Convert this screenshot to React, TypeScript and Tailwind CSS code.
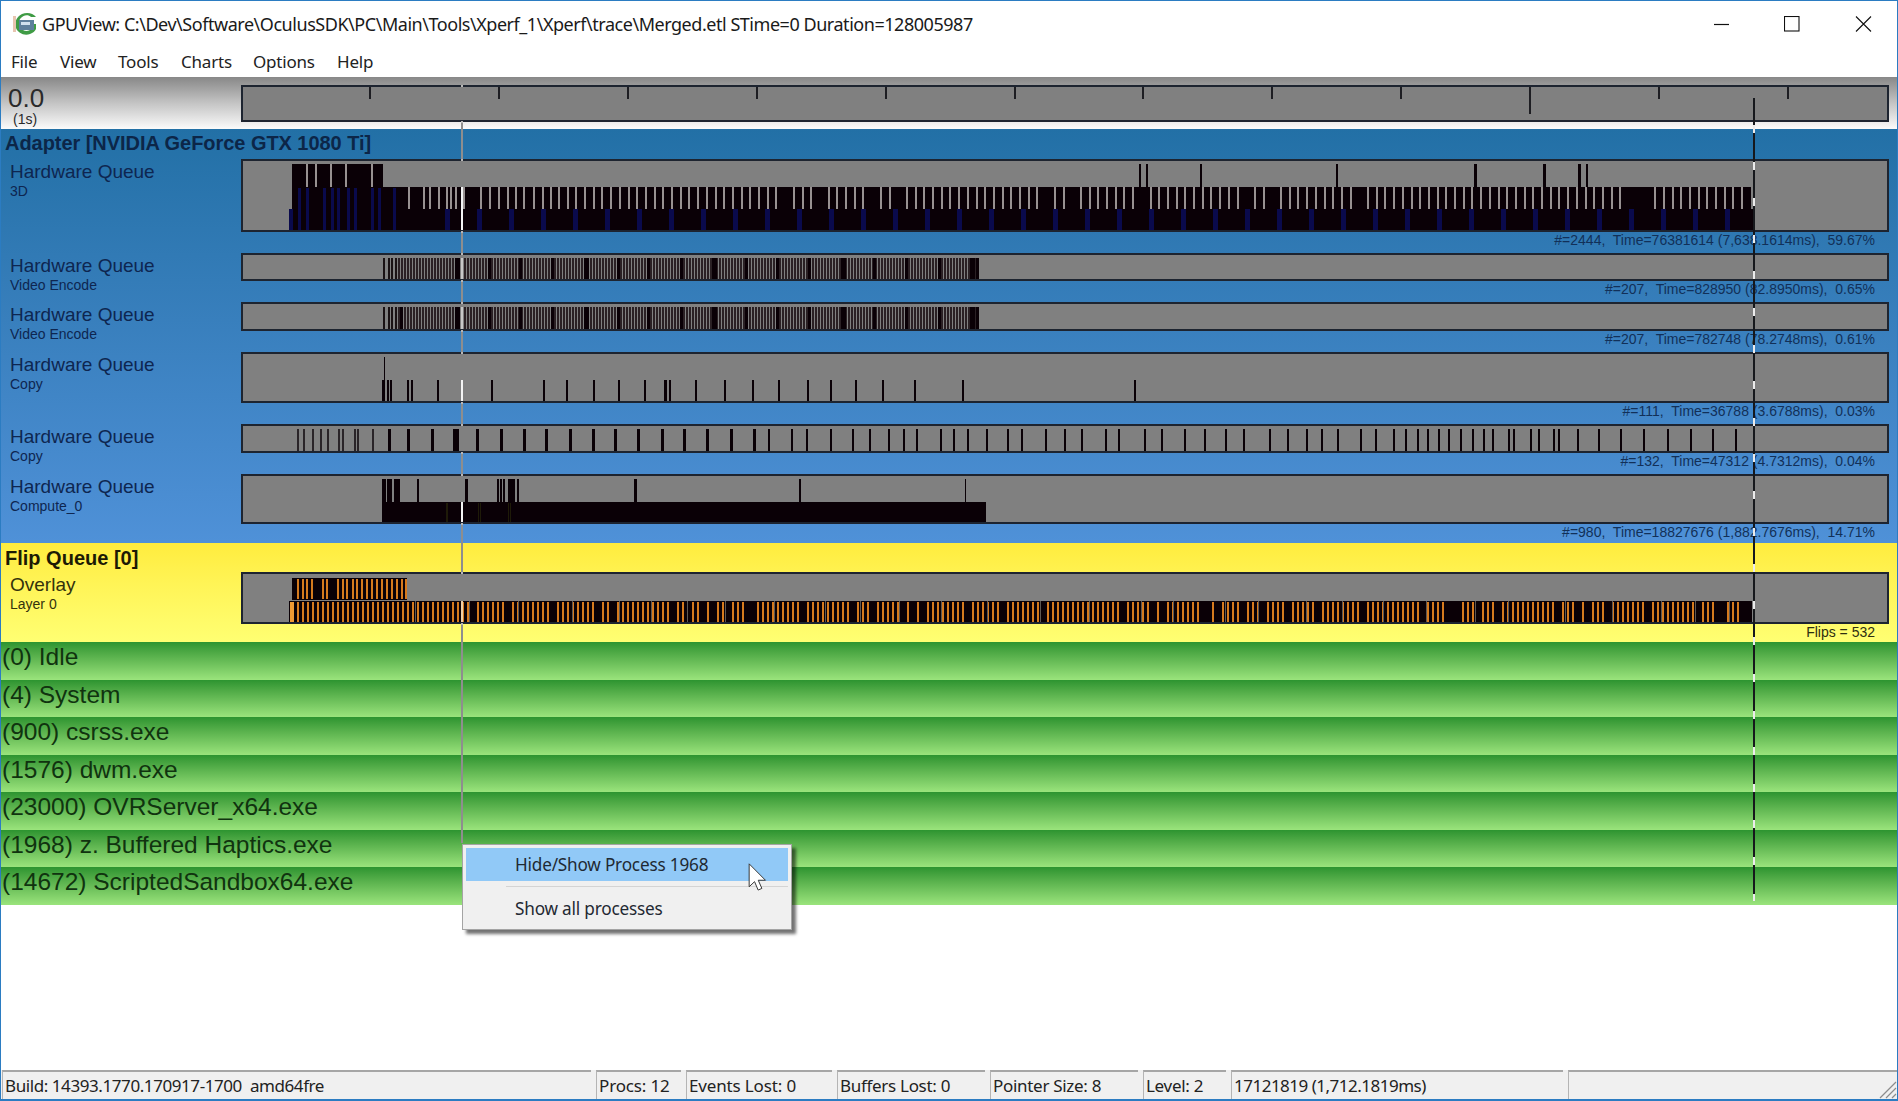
import React from "react";

type Rect = [number, number, number, number, string];

const BLACK = "#0a0006";
const BLUE = "#0a0a4c";
const ORANGE = "#d67a1e";
const LIGHT = "#989191";
const WHITE = "#f4f4f4";

function seeded(seed: number) {
  let s = seed;
  return () => {
    s = (s * 1664525 + 1013904223) % 4294967296;
    return s / 4294967296;
  };
}

function ticks(xs: number[], y: number, h: number, w = 2): Rect[] {
  return xs.map((x) => [x, y, w, h, BLACK] as Rect);
}

function hw3d(): Rect[] {
  const r: Rect[] = [];
  const rnd = seeded(11);
  r.push([292, 164, 91, 23, BLACK]);
  [306, 315, 330, 345, 371].forEach((x) => r.push([x, 164, 2, 23, LIGHT]));
  [1139, 1146, 1200, 1336, 1474, 1543, 1578, 1586].forEach((x) => r.push([x, 164, x === 1474 || x === 1543 || x === 1578 ? 3 : 2, 23, BLACK]));
  r.push([292, 187, 1459, 22, BLACK]);
  r.push([289, 209, 1465, 22, BLACK]);
  [408, 423, 429, 438, 446, 450, 455, 463, 480, 489, 498, 507, 515, 523, 533, 542, 550, 558, 567, 575].forEach((x) => r.push([x, 187, 2, 22, LIGHT]));
  for (let x = 584; x < 1745; x += 8.7) {
    const v = rnd();
    if (v > 0.07) r.push([Math.round(x), 187, 2, 22, LIGHT]);
  }
  [298, 306, 323, 331, 337, 347, 354, 371, 378, 393].forEach((x) => r.push([x, 188, 3, 43, BLUE]));
  r.push([289, 209, 4, 22, BLUE]);
  for (let x = 445; x < 1745; x += 32) r.push([Math.round(x), 209, 5, 22, BLUE]);
  r.push([461, 187, 2, 44, WHITE]);
  return r;
}

function encode(top: number, extra: number[]): Rect[] {
  const r: Rect[] = [];
  const y = top + 5;
  const h = 23;
  [383, 388, 391, 395].forEach((x) => r.push([x, y, 2, h, "#1a1214"]));
  for (let x = 398; x < 980; x += 3) r.push([x, y, 2, h, "#2a2024"]);
  [455, 488, 519, 551, 584, 617, 647, 680, 712, 745, 776, 808, 841, 873, 905, 938, 970, 976].concat(extra).forEach((x, i) => r.push([x, y, i % 4 === 0 ? 5 : 3, h, BLACK]));
  r.push([461, y, 2, h, "#c8c8c8"]);
  return r;
}

function copyA(): Rect[] {
  const r = ticks([383, 387, 390, 407, 411, 437, 491, 543, 566, 593, 618, 644, 664, 669, 695, 724, 752, 778, 807, 830, 855, 882, 914, 962, 1134], 380, 23);
  r.push([384, 357, 1, 23, BLACK]);
  r.push([382, 380, 3, 23, BLACK]);
  r.push([664, 380, 3, 23, BLACK]);
  r.push([461, 380, 2, 23, WHITE]);
  return r;
}

function copyB(): Rect[] {
  const xs = [297, 303, 312, 320, 327, 338, 342, 354, 357, 372, 388, 407, 431, 453, 456, 476, 500, 523, 545, 569, 592, 614, 637, 661, 683, 706, 730];
  const rnd = seeded(5);
  let x = 753;
  while (x < 1400) {
    xs.push(Math.round(x));
    x += 12 + rnd() * 14;
  }
  [15, 50, 80, 115, 145, 180, 215, 250, 275, 325, 340, 390, 415, 460, 475, 530, 595, 660, 730, 800, 870, 935, 1005].forEach((v) => xs.push(1400 + Math.round(v / 3)));
  return xs.map((v) => [v, 429, v < 380 ? 2 : v < 760 ? 3 : 2, 23, v < 380 ? "#2a2428" : BLACK] as Rect);
}

function compute(): Rect[] {
  const r: Rect[] = [
    [382, 479, 4, 23, BLACK],
    [387, 479, 5, 23, BLACK],
    [394, 479, 6, 23, BLACK],
    [417, 479, 2, 23, BLACK],
    [465, 479, 3, 23, BLACK],
    [497, 479, 2, 23, BLACK],
    [500, 479, 2, 23, BLACK],
    [503, 479, 2, 23, BLACK],
    [508, 479, 7, 23, BLACK],
    [517, 479, 2, 23, BLACK],
    [634, 479, 3, 23, BLACK],
    [799, 479, 2, 23, BLACK],
    [965, 479, 1, 23, BLACK],
    [382, 502, 604, 22, BLACK],
  ];
  [446, 447, 447, 480, 478, 508, 510].forEach((x) => r.push([x, 503, 1, 19, "#1e1a08"]));
  r.push([461, 502, 2, 22, WHITE]);
  return r;
}

function overlay(): Rect[] {
  const r: Rect[] = [[292, 578, 115, 22, BLACK], [289, 601, 1463, 23, BLACK]];
  [297, 302, 306, 311, 322, 326, 337, 342, 346, 352, 356, 361, 366, 371, 376, 381, 386, 391, 396, 401, 405].forEach((x) => r.push([x, 579, 2, 20, ORANGE]));
  r.push([290, 602, 4, 22, "#ef9a34"]);
  const rnd = seeded(23);
  for (let x = 297; x < 1750; x += 5) {
    if (x < 412 || rnd() > 0.13) r.push([x, 602, 2, 22, ORANGE]);
  }
  for (let x = 415; x < 1740; x += 32 + Math.floor(rnd() * 26)) r.push([x, 601, 1, 23, "#5e5854"]);
  r.push([461, 601, 2, 23, "#f0d0a8"]);
  return r;
}

function rulerTicks(): Rect[] {
  const r: Rect[] = [];
  for (let i = 0; i < 12; i++) {
    const x = 369 + Math.round(i * 128.9);
    r.push([x, 87, 2, i === 9 ? 27 : 12, "#1d1d22"]);
  }
  return r;
}

function Track({ top, height, rects }: { top: number; height: number; rects: Rect[] }) {
  const inner = height - 4;
  return (
    <div className="relative z-10 w-full border-2 border-[#1d2430] bg-[#808080]" style={{ height }}>
      <svg className="block h-full w-full" viewBox={`243 ${top + 2} 1644 ${inner}`} preserveAspectRatio="none" shapeRendering="crispEdges">
        {rects.map((b, i) => (
          <rect key={i} x={b[0]} y={b[1]} width={b[2]} height={b[3]} fill={b[4]} />
        ))}
      </svg>
    </div>
  );
}

function QueueRow({ top, height, rowHeight, title, sub, stat, rects, textClass, statClass }: { top: number; height: number; rowHeight: number; title: string; sub: string; stat: string; rects: Rect[]; textClass: string; statClass: string }) {
  return (
    <div className="flex" style={{ height: rowHeight }}>
      <div className={`w-[240px] shrink-0 pl-[9px] ${textClass}`}>
        <div className="h-[24px] pt-px text-[19px] leading-[24px] whitespace-nowrap">{title}</div>
        <div className="h-[16px] text-[14px] leading-[16px] whitespace-nowrap">{sub}</div>
      </div>
      <div className="min-w-0 flex-1 pr-[8px]">
        <Track top={top} height={height + 1} rects={rects} />
        <div className={`-mt-px pr-[14px] text-right text-[14px] leading-[18px] whitespace-pre ${statClass}`}>{stat}</div>
      </div>
    </div>
  );
}

function Process({ label }: { label: string }) {
  return (
    <div className="h-[37.5px] bg-gradient-to-b from-[#2c9430] to-[#9ae47c] pl-[1px] text-[24.5px] leading-[30px] whitespace-nowrap text-[#10330f]">
      {label}
    </div>
  );
}

function StatusCell({ w, children, extra = "" }: { w: string; children?: React.ReactNode; extra?: string }) {
  return (
    <div className={`${w} ${extra} h-full shrink-0 border-t-2 border-l border-t-[#a6a6a6] border-l-[#b4b4b4] pl-[2px] text-[17px] leading-[28px] whitespace-pre text-[#222]`}>
      {children}
    </div>
  );
}

const processes = ["(0) Idle", "(4) System", "(900) csrss.exe", "(1576) dwm.exe", "(23000) OVRServer_x64.exe", "(1968) z. Buffered Haptics.exe", "(14672) ScriptedSandbox64.exe"];
const crossings = [85, 121, 159, 231, 253, 280, 302, 330, 352, 402, 424, 452, 474, 523, 572, 623];

export default function App() {
  const blue = "text-[#0e2650]";
  const stat = "text-[#123058]";
  return (
    <div className="relative flex h-[1101px] w-[1898px] flex-col overflow-hidden border border-b-2 border-[#2b7cc2] bg-white font-['Liberation_Sans',sans-serif]">
      {/* title bar */}
      <div className="flex h-[46px] shrink-0 items-center pl-[12px] font-['Noto_Sans',sans-serif]">
        <svg width="26" height="24" viewBox="0 0 26 24" className="mr-[3px] shrink-0">
          <path d="M23 5C20 1 14 0 9 2 3 5 1 11 3 16c2 5 8 8 14 6 3-1 5-3 6-5v-5h-9v3h5v1c-2 3-6 4-9 2-4-2-5-7-3-11 3-4 8-5 11-2z" fill="#3f9b45" />
          <rect x="6" y="8" width="15" height="10" fill="#5d7f9c" />
          <rect x="8" y="10" width="9" height="3" fill="#cfe0ee" />
          <rect x="0" y="4" width="3" height="16" fill="#e8c4b0" />
        </svg>
        <span className="text-[18px] tracking-[-0.46px] whitespace-nowrap text-[#1a1a1a]">GPUView: C:\Dev\Software\OculusSDK\PC\Main\Tools\Xperf_1\Xperf\trace\Merged.etl STime=0 Duration=128005987</span>
        <div className="ml-auto flex items-center">
          <svg width="16" height="16" viewBox="0 0 16 16" className="mr-[54px]"><path d="M0 8.5h15" stroke="#111" strokeWidth="1.2" /></svg>
          <svg width="16" height="16" viewBox="0 0 16 16" className="mr-[55px]"><rect x="0.5" y="0.5" width="14.5" height="14.5" fill="none" stroke="#111" strokeWidth="1.1" /></svg>
          <svg width="17" height="16" viewBox="0 0 17 16" className="mr-[25px]"><path d="M1 0.5l15 15M16 0.5l-15 15" stroke="#111" strokeWidth="1.1" /></svg>
        </div>
      </div>
      {/* menu */}
      <div className="flex h-[30px] shrink-0 items-center pl-[10px] font-['Noto_Sans',sans-serif] text-[17px] tracking-[-0.2px] text-[#222]">
        <span className="w-[49px]">File</span>
        <span className="w-[58px]">View</span>
        <span className="w-[63px]">Tools</span>
        <span className="w-[72px]">Charts</span>
        <span className="w-[84px]">Options</span>
        <span>Help</span>
      </div>
      {/* ruler */}
      <div className="flex h-[52px] shrink-0 bg-gradient-to-b from-[#888888] via-[#c4c4c4] to-[#fbfbfb] pt-[8px]">
        <div className="w-[240px] shrink-0 pl-[7px] text-[#2a2a2a]">
          <div className="text-[26px] leading-[26px]">0.0</div>
          <div className="pl-[5px] text-[14px] leading-[16px]">(1s)</div>
        </div>
        <div className="min-w-0 flex-1 pr-[8px]">
          <Track top={85} height={37} rects={rulerTicks()} />
        </div>
      </div>
      {/* adapter */}
      <div className="h-[414px] shrink-0 bg-gradient-to-b from-[#2270a6] to-[#4f91d8]">
        <div className="h-[30px] pl-[4px] text-[20px] leading-[28px] font-bold tracking-[-0.05px] whitespace-nowrap text-[#0c2648]">Adapter [NVIDIA GeForce GTX 1080 Ti]</div>
        <QueueRow top={159} height={72} rowHeight={94} title="Hardware Queue" sub="3D" stat="#=2444,  Time=76381614 (7,638.1614ms),  59.67%" rects={hw3d()} textClass={blue} statClass={stat} />
        <QueueRow top={253} height={27} rowHeight={49} title="Hardware Queue" sub="Video Encode" stat="#=207,  Time=828950 (82.8950ms),  0.65%" rects={encode(253, [])} textClass={blue} statClass={stat} />
        <QueueRow top={302} height={28} rowHeight={50} title="Hardware Queue" sub="Video Encode" stat="#=207,  Time=782748 (78.2748ms),  0.61%" rects={encode(302, [400])} textClass={blue} statClass={stat} />
        <QueueRow top={352} height={50} rowHeight={72} title="Hardware Queue" sub="Copy" stat="#=111,  Time=36788 (3.6788ms),  0.03%" rects={copyA()} textClass={blue} statClass={stat} />
        <QueueRow top={424} height={28} rowHeight={50} title="Hardware Queue" sub="Copy" stat="#=132,  Time=47312 (4.7312ms),  0.04%" rects={copyB()} textClass={blue} statClass={stat} />
        <QueueRow top={474} height={49} rowHeight={69} title="Hardware Queue" sub="Compute_0" stat="#=980,  Time=18827676 (1,882.7676ms),  14.71%" rects={compute()} textClass={blue} statClass={stat} />
      </div>
      {/* flip queue */}
      <div className="h-[99px] shrink-0 bg-gradient-to-b from-[#ffec3d] to-[#ffff72]">
        <div className="h-[29px] pl-[4px] text-[20px] leading-[30px] font-bold text-[#1c1a04]">Flip Queue [0]</div>
        <QueueRow top={572} height={51} rowHeight={70} title="Overlay" sub="Layer 0" stat="Flips = 532" rects={overlay()} textClass="text-[#33320c]" statClass="text-[#2e2e10]" />
      </div>
      {/* processes */}
      <div className="shrink-0">
        {processes.map((p) => (
          <Process key={p} label={p} />
        ))}
      </div>
      <div className="flex-1" />
      {/* status bar */}
      <div className="flex h-[29px] shrink-0 gap-[5px] bg-[#f0f0f0] pl-[1px] font-['Noto_Sans',sans-serif]">
        <StatusCell w="w-[589px]" extra="tracking-[-0.42px]">Build: 14393.1770.170917-1700  amd64fre</StatusCell>
        <StatusCell w="w-[85px]" extra="tracking-[-0.15px]">Procs: 12</StatusCell>
        <StatusCell w="w-[146px]" extra="tracking-[-0.15px]">Events Lost: 0</StatusCell>
        <StatusCell w="w-[148px]" extra="tracking-[-0.3px]">Buffers Lost: 0</StatusCell>
        <StatusCell w="w-[148px]" extra="tracking-[-0.3px]">Pointer Size: 8</StatusCell>
        <StatusCell w="w-[83px]" extra="tracking-[-0.3px]">Level: 2</StatusCell>
        <StatusCell w="w-[332px]" extra="tracking-[-0.5px]">17121819 (1,712.1819ms)</StatusCell>
        <div className="relative h-full flex-1 border-t-2 border-l border-t-[#a6a6a6] border-l-[#b4b4b4]">
          <svg width="20" height="20" viewBox="0 0 20 20" className="absolute right-0 bottom-0">
            <path d="M19 3L3 19M19 9L9 19M19 15L15 19" stroke="#8c8c8c" strokeWidth="1.2" />
          </svg>
        </div>
      </div>

      {/* cursor marker A: behind the tracks, bright where it crosses their borders */}
      <div className="absolute top-[120px] left-[460px] z-0 h-[722px] w-[2px] bg-[#8e8e8e]" />
      {crossings.map((y) => (
        <div key={y} className="absolute left-[460px] z-20 h-[2px] w-[2px] bg-[#b8b8b8]" style={{ top: y - 1 }} />
      ))}
      {/* cursor marker B */}
      <div className="absolute top-[97px] left-[1752px] z-20 h-[803px] w-[2px] bg-[repeating-linear-gradient(to_bottom,#16181c_0px,#16181c_27px,#ececec_27px,#ececec_35px,#16181c_35px,#16181c_36.6px)]" />

      {/* context menu */}
      <div className="absolute top-[843px] left-[461px] z-30 h-[86px] w-[330px] border border-[#a4a4a4] bg-[#f0f0f0] p-[3px] font-['Noto_Sans',sans-serif] text-[17.2px] tracking-[-0.2px] text-[#1f2933] shadow-[4px_4px_3px_rgba(0,0,0,0.55)]">
        <div className="h-[33px] bg-[#91c9f7] pl-[49px] leading-[34px]">Hide/Show Process 1968</div>
        <div className="mt-[5px] ml-[40px] h-px bg-[#d4d4d4]" />
        <div className="pt-[6px] pl-[49px] leading-[32px]">Show all processes</div>
      </div>
      <svg width="20" height="29" viewBox="0 0 14 21" className="absolute top-[862px] left-[747px] z-40">
        <path d="M0.6 0.6V17.2L4.5 13.5L7.1 19.6L9.8 18.4L7.2 12.5H12.4Z" fill="#fff" stroke="#333" strokeWidth="0.7" />
      </svg>
    </div>
  );
}
